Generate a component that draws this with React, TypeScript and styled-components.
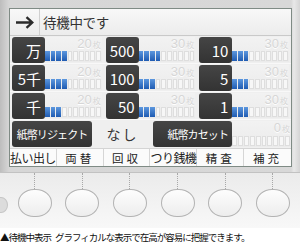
import React from 'react';
import styled, { createGlobalStyle } from 'styled-components';

const GlobalStyle = createGlobalStyle`
  html, body {
    margin: 0;
    padding: 0;
    background: #ffffff;
  }
  body {
    font-family: "Noto Sans CJK JP", "Noto Sans", sans-serif;
  }
`;

// Device frame
const Page = styled.div`
  width: 300px;
  height: 245px;
  overflow: hidden;
  display: flex;
  flex-direction: column;
  background: #ffffff;
`;

const Bezel = styled.div`
  height: 173px;
  box-sizing: border-box;
  padding: 8px 8px 6px 9px;
  background: linear-gradient(to right, #bdbdbd 0px, #d6d6d6 9px, #d8d8d8 291px, #e8e8e8 294px, #d4d4d4 300px);
  border-bottom: 1px solid #c2c2c2;
`;

const Screen = styled.div`
  height: 159px;
  box-sizing: border-box;
  border: 1px solid #7f8b85;
  background: #eeeeee;
  display: flex;
  flex-direction: column;
`;

// Header
const Header = styled.div`
  height: 28px;
  box-sizing: border-box;
  display: grid;
  grid-template-columns: 30px 143px 1fr;
  border-bottom: 1px solid #c9c9c9;
  background: linear-gradient(#f8f8f8, #ececec);
`;

const HeaderCell = styled.div<{ $last?: boolean }>`
  display: flex;
  align-items: center;
  justify-content: ${(p) => (p.$last ? 'flex-start' : 'center')};
  border-right: ${(p) => (p.$last ? 'none' : '1px solid #d0d0d0')};
`;

const Status = styled.div`
  padding-left: 3px;
  font-size: 13.5px;
  color: #333;
  letter-spacing: -0.3px;
`;

// Money grid
const Grid = styled.div`
  display: grid;
  grid-template-columns: repeat(3, 1fr);
  grid-auto-rows: 28px;
`;

const Cell = styled.div`
  display: flex;
  box-sizing: border-box;
  padding: 1px 2px 1px 2px;
  border-bottom: 1px solid #f8f8f8;
  background: #efefef;
`;

const Box = styled.div<{ $w: number; $align?: string }>`
  width: ${(p) => p.$w}px;
  flex: none;
  box-sizing: border-box;
  height: 26px;
  border-radius: 3px;
  background: linear-gradient(#454545, #333333);
  color: #ffffff;
  display: flex;
  align-items: center;
  justify-content: ${(p) => p.$align || 'flex-end'};
  padding: 1px 4px 0;
  font-size: 15px;
  line-height: 1;
`;

const SmallBoxText = styled.span`
  font-size: 11px;
  letter-spacing: -0.9px;
`;

const Meter = styled.div`
  flex: 1;
  display: flex;
  flex-direction: column;
  justify-content: space-between;
  padding: 1px 1px 1px 0;
  background: linear-gradient(#f2f2f2, #ebebeb);
`;

const Capacity = styled.div`
  align-self: flex-end;
  color: #d6d6d6;
  text-shadow: 0 1px 0 #ffffff;
  font-size: 13px;
  line-height: 11px;
  font-family: "Liberation Sans", sans-serif;
  span {
    font-family: "Noto Sans CJK JP", sans-serif;
    font-size: 8px;
    margin-left: 1px;
  }
`;

const Segments = styled.div`
  display: flex;
  gap: 1px;
  height: 10px;
`;

const Segment = styled.div<{ $on: boolean }>`
  flex: 1;
  background: ${(p) => (p.$on ? 'linear-gradient(#5c97de, #1f5bb2)' : '#f7f7f7')};
  box-shadow: ${(p) => (p.$on ? 'none' : 'inset 0 0 0 1px #dedede')};
`;

const Row4 = styled.div`
  height: 28px;
  box-sizing: border-box;
  display: flex;
  padding: 1px 0 1px 2px;
  background: #efefef;
`;

const None = styled.div`
  width: 61px;
  flex: none;
  display: flex;
  align-items: center;
  justify-content: center;
  font-size: 14px;
  letter-spacing: 2px;
  color: #333;
`;

// Function tabs
const Tabs = styled.div`
  flex: 1;
  display: grid;
  grid-template-columns: repeat(6, 1fr);
  background: #fbfbfb;
  border-top: 1px solid #d4d4d4;
`;

const Tab = styled.div<{ $wide?: boolean }>`
  display: flex;
  align-items: center;
  justify-content: center;
  font-size: ${(p) => (p.$wide ? '12px' : '11.5px')};
  letter-spacing: ${(p) => (p.$wide ? '-0.6px' : '3px')};
  color: #222;
  border-right: 1px solid #d6d6d6;
  &:last-child {
    border-right: none;
  }
`;

// Hardware buttons
const Buttons = styled.div`
  position: relative;
  height: 55px;
  box-sizing: border-box;
  display: grid;
  grid-template-columns: repeat(6, 47.6px);
  padding-left: 11px;
  background: linear-gradient(#ebebeb, #f3f3f3 60%, #f8f8f8);
`;

const Slot = styled.div`
  display: flex;
  flex-direction: column;
  align-items: center;
`;

const Wire = styled.div`
  width: 0;
  height: 16px;
  border-left: 1px dotted #a8a8a8;
`;

const Key = styled.div`
  width: 34px;
  height: 28px;
  box-sizing: border-box;
  border: 1.5px solid #b3b3b3;
  border-radius: 16px / 14px;
  background: linear-gradient(#fdfdfd, #ededed);
`;

const SideKnob = styled.div`
  position: absolute;
  left: -6px;
  top: 24px;
  width: 12px;
  height: 14px;
  border-radius: 50%;
  background: #dcdcdc;
  border: 1px solid #c6c6c6;
`;

const Caption = styled.div`
  flex: 1;
  padding-top: 3px;
  font-size: 9.5px;
  line-height: 12px;
  letter-spacing: -1px;
  color: #111;
  white-space: nowrap;
  background: #ffffff;
`;

const CaptionLead = styled.span`
  margin-right: 4px;
`;

const Arrow = () => (
  <svg width="19" height="13" viewBox="0 0 19 13">
    <path d="M1 6.5H17M11.5 1.2L17.3 6.5L11.5 11.8" stroke="#2b2b2b" strokeWidth="2.3" fill="none" />
  </svg>
);

const Bar: React.FC<{ cap: number; on: number }> = ({ cap, on }) => (
  <Meter>
    <Capacity>
      {cap}
      <span>枚</span>
    </Capacity>
    <Segments>
      {Array.from({ length: 10 }, (_, i) => (
        <Segment key={i} $on={i < on} />
      ))}
    </Segments>
  </Meter>
);

const money = [
  { label: '万', cap: 20, on: 4 },
  { label: '500', cap: 30, on: 4 },
  { label: '10', cap: 30, on: 3 },
  { label: '5千', cap: 20, on: 4 },
  { label: '100', cap: 30, on: 3 },
  { label: '5', cap: 30, on: 3 },
  { label: '千', cap: 20, on: 3 },
  { label: '50', cap: 30, on: 3 },
  { label: '1', cap: 30, on: 3 },
];

const tabs = ['払い出し', '両替', '回収', 'つり銭機', '精査', '補充'];

const App: React.FC = () => {
  return (
    <Page>
      <GlobalStyle />
      <Bezel>
        <Screen>
          <Header>
            <HeaderCell>
              <Arrow />
            </HeaderCell>
            <HeaderCell $last>
              <Status>待機中です</Status>
            </HeaderCell>
            <HeaderCell $last />
          </Header>
          <Grid>
            {money.map((m) => (
              <Cell key={m.label}>
                <Box $w={33}>{m.label}</Box>
                <Bar cap={m.cap} on={m.on} />
              </Cell>
            ))}
          </Grid>
          <Row4>
            <Box $w={80} $align="center">
              <SmallBoxText>紙幣リジェクト</SmallBoxText>
            </Box>
            <None>なし</None>
            <Box $w={79}>
              <SmallBoxText>紙幣カセット</SmallBoxText>
            </Box>
            <Bar cap={0} on={0} />
          </Row4>
          <Tabs>
            {tabs.map((t) => (
              <Tab key={t} $wide={t.length > 2}>
                {t}
              </Tab>
            ))}
          </Tabs>
        </Screen>
      </Bezel>
      <Buttons>
        <SideKnob />
        {tabs.map((t) => (
          <Slot key={t}>
            <Wire />
            <Key />
          </Slot>
        ))}
      </Buttons>
      <Caption>
        <CaptionLead>▲待機中表示</CaptionLead>グラフィカルな表示で在高が容易に把握できます。
      </Caption>
    </Page>
  );
};

export default App;
